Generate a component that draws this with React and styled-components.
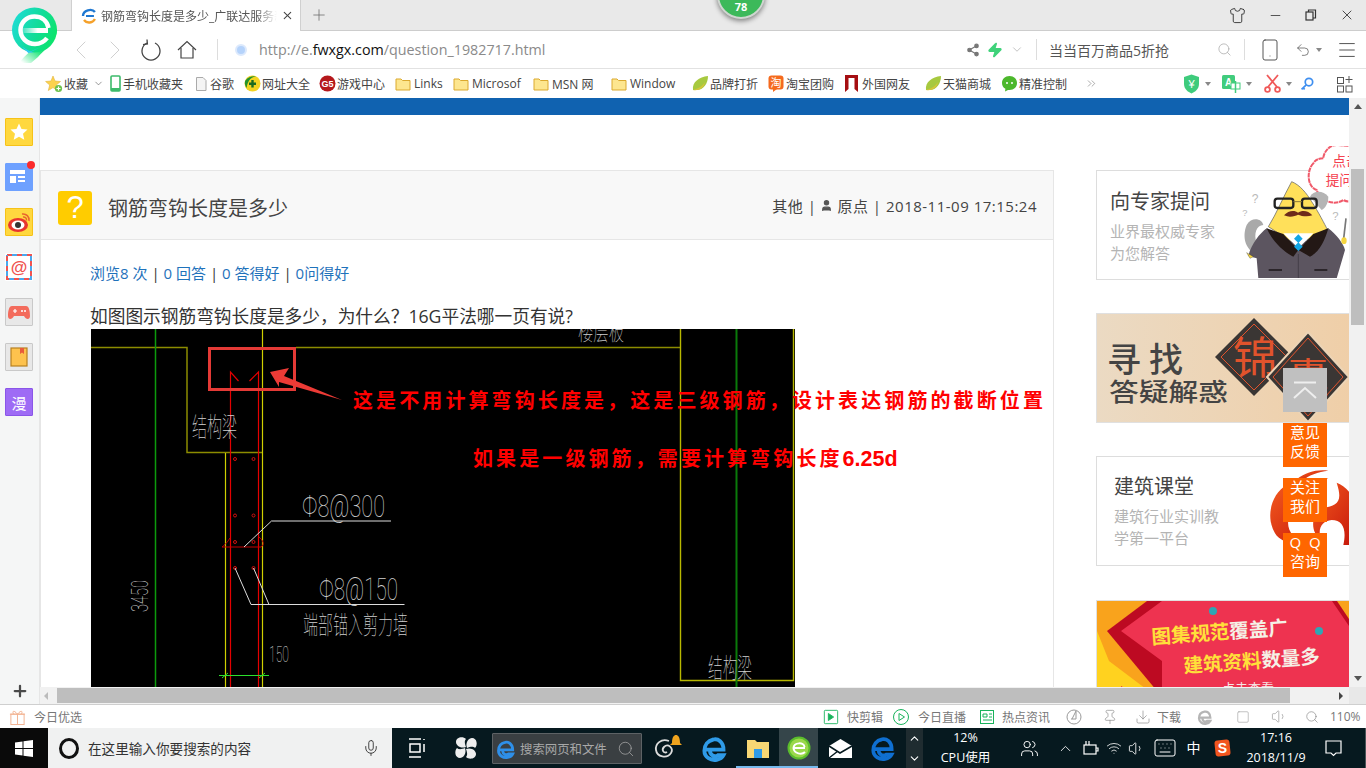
import React from "react";
import styled, { createGlobalStyle } from "styled-components";
import { ChevronDown, ChevronLeft, ChevronRight, ChevronUp, Menu, Minus, Plus, Search, Shirt, Smartphone, Share2, Undo2, X, Zap, Mic, ChevronsRight, Download, Pin, Volume1, Square, Wifi, Keyboard, User, Users } from "lucide-react";

const GlobalStyle = createGlobalStyle`
  html, body { margin: 0; padding: 0; background: #fff; overflow: hidden; }
  body { font-family: "Open Sans", "Noto Sans CJK SC", sans-serif; }
  * { box-sizing: border-box; }
`;

const Screen = styled.div`
  position: relative;
  width: 1366px;
  height: 768px;
  display: flex;
  flex-direction: column;
  overflow: hidden;
`;

/* ---------- browser chrome ---------- */
const TitleBar = styled.div`
  height: 31px;
  flex: none;
  display: flex;
  align-items: flex-end;
  padding-left: 71px;
  background: #e9e9e9;
  border-bottom: 1px solid #cdcdcd;
`;
const Tab = styled.div`
  position: relative;
  width: 230px;
  height: 31px;
  margin-bottom: -1px;
  display: flex;
  align-items: center;
  padding: 0 6px 0 9px;
  gap: 4px;
  background: #fff;
  border: 1px solid #d0d0d0;
  border-bottom: none;
  border-top: none;
`;
const TabText = styled.div`
  width: 177px;
  font-size: 12px;
  color: #555;
  white-space: nowrap;
  overflow: hidden;
  mask-image: linear-gradient(to right, #000 88%, transparent);
`;
const NewTab = styled.div`
  width: 36px;
  height: 30px;
  display: flex;
  align-items: center;
  justify-content: center;
  color: #666;
`;
const WindowButtons = styled.div`
  margin-left: auto;
  height: 30px;
  display: flex;
  align-items: center;
  padding-right: 11px;
  gap: 22px;
  color: #333;
`;
const BrandLogo = styled.div`
  position: absolute;
  left: 11px;
  top: 7px;
  z-index: 3;
`;
const ScoreBadge = styled.div`
  position: absolute;
  left: 717px;
  top: -29px;
  width: 48px;
  height: 48px;
  border-radius: 50%;
  background: #3cb95a;
  border: 2px solid #cfd6d0;
  box-shadow: 0 2px 5px rgba(0, 0, 0, 0.45);
  color: #fff;
  font-size: 11px;
  font-weight: 700;
  display: flex;
  align-items: flex-end;
  justify-content: center;
  padding-bottom: 3px;
  line-height: 14px;
  z-index: 3;
`;
const AddressBar = styled.div`
  height: 37px;
  flex: none;
  display: flex;
  align-items: center;
  background: #fff;
  color: #777;
`;
const NavSlot = styled.div`
  flex: none;
  width: ${(p) => p.$w}px;
  display: flex;
  align-items: center;
  justify-content: center;
  color: ${(p) => p.$color || "#444"};
`;
const VLine = styled.div`
  flex: none;
  width: 1px;
  height: 21px;
  background: #ddd;
`;
const UrlDot = styled.div`
  flex: none;
  width: 12px;
  height: 12px;
  margin: 0 12px 0 17px;
  border-radius: 50%;
  background: #b5d3fb;
  border: 2px solid #dce9fc;
`;
const Url = styled.div`
  flex: none;
  width: 707px;
  font-size: 14.3px;
  color: #8a8a8a;
  white-space: nowrap;
  b { font-weight: 400; color: #111; }
`;
const AdText = styled.div`
  flex: none;
  width: 174px;
  padding-left: 12px;
  font-size: 14px;
  color: #555;
  white-space: nowrap;
`;
const Caret = styled.span`
  display: inline-block;
  width: 0;
  height: 0;
  border-left: 3px solid transparent;
  border-right: 3px solid transparent;
  border-top: 4px solid #888;
`;

const BookmarkBar = styled.div`
  height: 30px;
  flex: none;
  display: flex;
  align-items: center;
  background: #fff;
  border-top: 1px solid #e2e2e2;
  padding-left: 45px;
  position: relative;
`;
const Collapse = styled.div`
  width: 0;
  margin-left: -30px;
  margin-right: 30px;
  color: #555;
  display: flex;
  align-items: center;
`;
const Bookmark = styled.div`
  flex: none;
  width: ${(p) => p.$w}px;
  display: flex;
  align-items: center;
  gap: 1px;
  font-size: 12px;
  color: #444;
  white-space: nowrap;
`;
const BookmarkTools = styled.div`
  flex: none;
  margin-left: 80px;
  display: flex;
  align-items: center;
`;
const ToolSlot = styled.div`
  flex: none;
  width: ${(p) => p.$w}px;
  display: flex;
  align-items: center;
  justify-content: center;
  gap: 5px;
`;

/* ---------- page ---------- */
const Middle = styled.div`
  flex: 1;
  min-height: 0;
  display: flex;
`;
const SideRail = styled.div`
  flex: none;
  width: 40px;
  display: flex;
  flex-direction: column;
  align-items: flex-start;
  gap: 17px;
  padding: 20px 0 4px 5px;
  background: #f5f6f6;
  border-right: 1px solid #e6e6e6;
`;
const RailTile = styled.div`
  position: relative;
  width: 28px;
  height: 28px;
  display: flex;
  align-items: center;
  justify-content: center;
  background: ${(p) => p.$bg};
  border: 1px solid ${(p) => p.$line};
  color: #fff;
  font-size: 15px;
  border-radius: 1px;
`;
const RedDot = styled.span`
  position: absolute;
  top: -3px;
  right: -3px;
  width: 8px;
  height: 8px;
  border-radius: 50%;
  background: #fb2a2a;
`;
const RailAdd = styled.div`
  margin-top: auto;
  margin-left: 6px;
  color: #4a4a4a;
  display: flex;
`;
const Viewport = styled.div`
  flex: 1;
  min-width: 0;
  display: flex;
  flex-direction: column;
`;
const ViewportRow = styled.div`
  flex: 1;
  min-height: 0;
  display: flex;
`;
const Page = styled.div`
  flex: 1;
  min-width: 0;
  overflow: hidden;
  background: #fff;
`;
const BlueBar = styled.div`
  height: 17px;
  background: #1062b0;
`;
const Columns = styled.div`
  display: flex;
  align-items: flex-start;
  padding-top: 55px;
  gap: 42px;
`;
const QuestionCard = styled.div`
  flex: none;
  width: 1014px;
  border: 1px solid #e6e6e6;
  border-bottom: none;
  background: #fff;
`;
const QuestionHead = styled.div`
  height: 69px;
  display: flex;
  align-items: center;
  padding: 6px 16px 0 17px;
  background: #f8f8f8;
  border-bottom: 1px solid #e6e6e6;
`;
const QuestionMark = styled.div`
  flex: none;
  width: 34px;
  height: 34px;
  border-radius: 3px;
  background: #ffcc00;
  color: #fff;
  font: 400 31px/34px "Liberation Sans", sans-serif;
  text-align: center;
`;
const QuestionTitle = styled.h1`
  margin: 0 0 2px 16px;
  font-size: 20px;
  font-weight: 400;
  color: #444;
`;
const QuestionMeta = styled.div`
  margin-left: auto;
  margin-bottom: 6px;
  display: flex;
  align-items: center;
  gap: 4px;
  font-size: 15px;
  letter-spacing: 0.5px;
  color: #444;
  white-space: nowrap;
`;
const QuestionBody = styled.div`
  padding: 22px 0 0 49px;
`;
const Stats = styled.div`
  height: 22px;
  line-height: 22px;
  font-size: 15px;
  color: #1f72bb;
  span { color: #333; }
`;
const QuestionText = styled.p`
  margin: 19px 0 0;
  height: 26px;
  line-height: 26px;
  font-size: 17.7px;
  color: #333;
  white-space: nowrap;
`;
const Drawing = styled.div`
  position: relative;
  width: 704px;
  height: 370px;
  margin-left: 1px;
  background: #000;
  svg { display: block; }
`;
const Remark = styled.div`
  position: absolute;
  left: ${(p) => p.$left}px;
  top: ${(p) => p.$top}px;
  font-size: 20px;
  line-height: 28px;
  font-weight: 700;
  letter-spacing: 3.1px;
  color: #ff0000;
  white-space: nowrap;
  b { font-family: "Liberation Sans", sans-serif; font-size: 21.5px; letter-spacing: 0; }
`;

const SideColumn = styled.div`
  flex: none;
  width: 290px;
  display: flex;
  flex-direction: column;
  gap: 33px;
`;
const PromoCard = styled.div`
  height: ${(p) => p.$h}px;
  display: flex;
  border: 1px solid #ddd;
  background: #fff;
  svg { display: block; flex: none; }
`;
const PromoText = styled.div`
  flex: none;
  width: ${(p) => p.$w}px;
  margin-left: ${(p) => p.$left}px;
  padding-top: ${(p) => p.$top}px;
`;
const PromoTitle = styled.div`
  font-size: 20px;
  line-height: 28px;
  color: #444;
`;
const PromoSub = styled.div`
  margin-top: 4px;
  font-size: 15px;
  line-height: 22px;
  color: #b4b4b4;
`;
const Art = styled.svg`
  margin-top: ${(p) => p.$top || 0}px;
`;
const BannerCard = styled.div`
  height: ${(p) => p.$h}px;
  margin-top: ${(p) => p.$top || 0}px;
  border: 1px solid #e0e0e0;
  overflow: hidden;
  svg { display: block; }
`;

const VScroll = styled.div`
  flex: none;
  position: relative;
  width: 17px;
  background: #f1f1f1;
  display: flex;
  flex-direction: column;
  align-items: center;
`;
const VThumb = styled.div`
  width: 13px;
  height: 156px;
  margin-top: 60px;
  background: #bebebe;
`;
const HScroll = styled.div`
  flex: none;
  height: 17px;
  display: flex;
  align-items: center;
  background: #f1f1f1;
`;
const HThumb = styled.div`
  width: 1233px;
  height: 15px;
  margin-left: 9px;
  background: #bebebe;
`;
const Arrow = styled.span`
  flex: none;
  width: 0;
  height: 0;
  ${(p) => p.$dir === "up" && "margin-top: 6px; border-left: 4px solid transparent; border-right: 4px solid transparent; border-bottom: 5px solid #555;"}
  ${(p) => p.$dir === "down" && "margin-top: auto; margin-bottom: 6px; border-left: 4px solid transparent; border-right: 4px solid transparent; border-top: 5px solid #555;"}
  ${(p) => p.$dir === "left" && "margin-left: 4px; border-top: 4px solid transparent; border-bottom: 4px solid transparent; border-right: 4px solid #bbb;"}
  ${(p) => p.$dir === "right" && "margin-left: 49px; border-top: 4px solid transparent; border-bottom: 4px solid transparent; border-left: 4px solid #444;"}
`;
const ScrollCorner = styled.div`
  flex: none;
  width: 17px;
  height: 17px;
  margin-left: auto;
  background: #e8e8e8;
`;

const FloatDock = styled.div`
  position: absolute;
  left: 1283px;
  top: 368px;
  width: 44px;
  display: flex;
  flex-direction: column;
  gap: 11px;
  z-index: 2;
`;
const DockTop = styled.div`
  height: 44px;
  background: #c0c0c0;
  display: flex;
  align-items: center;
  justify-content: center;
`;
const DockButton = styled.div`
  height: 44px;
  background: #ff6600;
  color: #fff;
  font-size: 15px;
  line-height: 19px;
  text-align: center;
  word-spacing: ${(p) => p.$spread || 0}px;
`;

/* ---------- status bar ---------- */
const StatusBar = styled.div`
  height: 24px;
  flex: none;
  display: flex;
  align-items: center;
  background: #fff;
  border-top: 1px solid #cfcfcf;
  font-size: 12px;
  color: #666;
  white-space: nowrap;
`;
const StatusItem = styled.div`
  flex: none;
  width: ${(p) => p.$w}px;
  display: flex;
  align-items: center;
  justify-content: ${(p) => p.$center ? "center" : "flex-start"};
  gap: ${(p) => p.$gap ?? 6}px;
  padding-left: ${(p) => p.$pad || 0}px;
  color: #777;
`;

/* ---------- taskbar ---------- */
const Taskbar = styled.div`
  height: 40px;
  flex: none;
  display: flex;
  align-items: stretch;
  background: #06191f;
  color: #fff;
`;
const StartButton = styled.div`
  flex: none;
  width: 48px;
  background: #0a0a0a;
  display: flex;
  align-items: center;
  justify-content: center;
`;
const SearchBox = styled.div`
  flex: none;
  width: 344px;
  display: flex;
  align-items: center;
  background: #f0f1f1;
  color: #333;
  font-size: 13.6px;
  padding-left: 11px;
`;
const CortanaRing = styled.div`
  flex: none;
  width: 20px;
  height: 21px;
  margin-right: 9px;
  border-radius: 50%;
  border: 3px solid #111;
`;
const SearchHint = styled.div`
  flex: 1;
`;
const MicSlot = styled.div`
  flex: none;
  width: 42px;
  display: flex;
  justify-content: center;
  color: #333;
`;
const TaskSlot = styled.div`
  position: relative;
  flex: none;
  width: ${(p) => p.$w}px;
  display: flex;
  flex-direction: column;
  align-items: center;
  justify-content: center;
  font-size: ${(p) => p.$size || 13}px;
  line-height: 20px;
  white-space: nowrap;
  background: ${(p) => p.$active ? "#35454a" : "transparent"};
  ${(p) => p.$line && "&::after { content: ''; position: absolute; left: 0; right: 0; bottom: 0; height: 2px; background: #76b9ed; }"}
`;
const WebSearch = styled.div`
  flex: none;
  width: 150px;
  margin: 5px 0 4px;
  margin-left: 1px;
  display: flex;
  align-items: center;
  gap: 4px;
  padding: 0 6px 0 3px;
  background: #3a3f42;
  border: 1px solid #5d6265;
  border-radius: 1px;
  font-size: 12.4px;
  color: #a8a8a8;
  white-space: nowrap;
`;
const ArrowStack = styled.div`
  flex: none;
  width: 17px;
  margin-left: 2px;
  background: #1f2c30;
  display: flex;
  flex-direction: column;
  align-items: center;
  justify-content: space-around;
`;
const NoticeEdge = styled.div`
  flex: 1;
  border-right: 1px solid #4a5558;
`;

const ask = "#b9b9b9";

const Logo = () => (
  <svg width="48" height="58" viewBox="0 0 48 58">
    <defs>
      <linearGradient id="lg" x1="0" y1="0.2" x2="1" y2="0.6">
        <stop offset="0" stopColor="#1fdcd8" />
        <stop offset="0.55" stopColor="#12dc9a" />
        <stop offset="1" stopColor="#0ce46a" />
      </linearGradient>
      <linearGradient id="tail" x1="0.8" y1="0.2" x2="0.1" y2="1">
        <stop offset="0" stopColor="#0ce46a" />
        <stop offset="0.5" stopColor="#28e57e" />
        <stop offset="1" stopColor="#ffffff" />
      </linearGradient>
      <linearGradient id="bar" x1="0" y1="0" x2="1" y2="0">
        <stop offset="0" stopColor="#fff" stopOpacity=".15" />
        <stop offset="0.6" stopColor="#fff" />
      </linearGradient>
    </defs>
    <path d="M46 22 C46 34 34 42 27 50 L20 56 L8 56 C14 48 24 40 30 36 Z" fill="url(#tail)" />
    <circle cx="23.500" cy="23" r="22.500" fill="url(#lg)" />
    <path d="M10 39 C14 42 18 44 18 45 L30 40 L17.500 46 Z" fill="#2fc8f0" />
    <path d="M8 36 C12 41 17 44 23 45.500 L17 45.500 Z" fill="#2fc8f0" />
    <rect x="11" y="21" width="26" height="5" fill="url(#bar)" />
    <path d="M37.500 21 C36 13 30 9.500 23.500 9.500 C15 9.500 9.500 16 9.500 23 C9.500 31 16 37 24 37 C29 37 33 35 36 31" fill="none" stroke="#fff" strokeWidth="4.500" />
  </svg>
);
const TabIcon = () => (
  <svg width="16" height="16" viewBox="0 0 16 16" fill="none">
    <path d="M2 8 C2 2 11 0 14 4" stroke="#1f78d1" strokeWidth="2.400" />
    <path d="M5 8 H13" stroke="#1f78d1" strokeWidth="2" />
    <path d="M3 12 C6 16 12 15 14 11" stroke="#f5a12a" strokeWidth="2.400" />
  </svg>
);
const Reload = () => (
  <svg width="22" height="22" viewBox="0 0 22 22" fill="none" stroke="#444" strokeWidth="1.300">
    <path d="M7 4 A9 9 0 1 0 15 4" />
    <path d="M7 0.500 L7.400 5 L3 5.600" />
  </svg>
);
const HomeIcon = () => (
  <svg width="20" height="20" viewBox="0 0 20 20" fill="none" stroke="#444" strokeWidth="1.200">
    <path d="M1 10 L10 1.500 L19 10" />
    <path d="M4 8 V18 H16 V8" />
  </svg>
);
const RestoreIcon = () => (
  <svg width="12" height="12" viewBox="0 0 12 12" fill="none" stroke="#333" strokeWidth="1.200">
    <rect x="1" y="3" width="7" height="8" />
    <path d="M3.500 3 V1 H10.500 V9 H8" />
  </svg>
);
const StarFav = () => (
  <svg width="18" height="18" viewBox="0 0 18 18">
    <path d="M8 1 L10 6 L15.500 6.500 L11.300 10 L12.600 15.500 L8 12.600 L3.300 15.500 L4.700 10 L0.600 6.500 L6 6Z" fill="#fbd24e" stroke="#e3b43a" strokeWidth=".6" />
    <circle cx="13.500" cy="13.500" r="3.600" fill="#6cc04a" />
    <path d="M13.500 11.500 V15.500 M11.500 13.500 H15.500" stroke="#fff" strokeWidth="1.200" />
  </svg>
);
const PhoneFav = () => (
  <svg width="13" height="17" viewBox="0 0 13 17">
    <rect x="2" y="1" width="9" height="15" rx="1" fill="#fff" stroke="#3dbb6b" strokeWidth="1.600" />
    <rect x="2" y="13" width="9" height="3" fill="#3dbb6b" />
  </svg>
);
const PageFav = () => (
  <svg width="16" height="16" viewBox="0 0 16 16" fill="#f4f4f4" stroke="#aaa">
    <path d="M3.500 1.500 H10 L13 4.500 V14.500 H3.500Z" />
  </svg>
);
const GlobeFav = () => (
  <svg width="17" height="17" viewBox="0 0 17 17">
    <circle cx="8.500" cy="8.500" r="8" fill="#f3d321" />
    <path d="M1 6 C5 1 9 1 12 1.600 C8 2 4 4 2.600 13 C1 11 .6 8 1 6Z" fill="#23922c" />
    <path d="M8.500 5 V12.500 M5 8.700 H12" stroke="#1a6b20" strokeWidth="2.400" />
  </svg>
);
const GameFav = () => (
  <svg width="17" height="17" viewBox="0 0 17 17">
    <circle cx="8.500" cy="8.500" r="8" fill="#b5181c" />
    <text x="8.500" y="12" textAnchor="middle" fontSize="9" fontWeight="700" fill="#fff" fontFamily="Liberation Sans">G5</text>
  </svg>
);
const Folder = () => (
  <svg width="16" height="15" viewBox="0 0 16 15" style={{ marginRight: 2 }}>
    <path d="M1 3 H6 L7.500 4.500 H15 V14 H1Z" fill="#fde68f" stroke="#dba92f" />
  </svg>
);
const Leaf = () => (
  <svg width="17" height="17" viewBox="0 0 17 17">
    <path d="M1 15 C0 7 7 2 16 1 C16 9 11 16 3 15Z" fill="#a7c93f" />
    <path d="M1 15 C5 14 10 12 13 7 C12 13 7 16 1 15Z" fill="#d6c53a" />
  </svg>
);
const TaoFav = () => (
  <svg width="17" height="17" viewBox="0 0 17 17">
    <rect x=".5" y=".5" width="15" height="14" rx="3" fill="#f56a1e" />
    <path d="M5 14 L5 17 L9 14Z" fill="#f56a1e" />
    <text x="8" y="12" textAnchor="middle" fontSize="11" fill="#fff">淘</text>
  </svg>
);
const RibbonFav = () => (
  <svg width="15" height="17" viewBox="0 0 15 17" style={{ marginRight: 2 }}>
    <path d="M1 0 H14 V17 L10.500 14 V3 H4.500 V14 L1 17Z" fill="#a50e12" />
  </svg>
);
const ChatFav = () => (
  <svg width="17" height="17" viewBox="0 0 17 17">
    <path d="M8.500 1 C13 1 16 4 16 8 C16 12 13 15 8.500 15 L7 15 L4 16.500 L4.400 13.800 C2 12.500 1 10.500 1 8 C1 4 4 1 8.500 1Z" fill="#4cb82c" />
    <circle cx="6" cy="8" r="1" fill="#fff" />
    <circle cx="11" cy="8" r="1" fill="#fff" />
  </svg>
);
const ShieldTool = () => (
  <svg width="17" height="20" viewBox="0 0 17 20">
    <path d="M8.500 0.500 L16 3 V10 C16 15 12 18 8.500 19.500 C5 18 1 15 1 10 V3Z" fill="#3ecb7c" />
    <text x="8.500" y="14" textAnchor="middle" fontSize="11" fill="#fff" fontFamily="Liberation Sans">¥</text>
  </svg>
);
const TranslateTool = () => (
  <svg width="20" height="20" viewBox="0 0 20 20">
    <rect x="1" y="1" width="13" height="14" rx="1.500" fill="#41cc7d" />
    <text x="4" y="12" fontSize="10" fontWeight="700" fill="#fff" fontFamily="Liberation Sans">A</text>
    <rect x="10" y="9" width="9" height="6" fill="#fff" stroke="#41cc7d" />
    <path d="M14.500 7 V19" stroke="#41cc7d" strokeWidth="1.500" />
  </svg>
);
const CutTool = () => (
  <svg width="17" height="19" viewBox="0 0 17 19" fill="none" stroke="#f05a5a" strokeWidth="1.800">
    <path d="M3 1 L13 13 M14 1 L4 13" />
    <circle cx="3.500" cy="15.500" r="2.400" />
    <circle cx="13.500" cy="15.500" r="2.400" />
  </svg>
);
const KeyTool = () => (
  <svg width="18" height="18" viewBox="0 0 18 18" fill="none" stroke="#3f8ff0" strokeWidth="2.200">
    <circle cx="11.500" cy="6.500" r="4.800" />
    <path d="M8 10 L2 16 M4 14 L6 16" />
  </svg>
);
const GridTool = () => (
  <svg width="16" height="18" viewBox="0 0 16 18" fill="none" stroke="#555">
    <rect x=".5" y="2.500" width="6" height="6" />
    <rect x=".5" y="11" width="6" height="6" />
    <rect x="9" y="11" width="6" height="6" />
    <path d="M12 1 V8 M8.500 4.500 H15.500" />
  </svg>
);

const MailMark = () => (
  <svg width="26" height="26" viewBox="0 0 26 26">
    <rect x="1" y="1" width="24" height="24" fill="none" stroke="#ef5350" strokeWidth="2" strokeDasharray="5 5" />
    <rect x="1" y="1" width="24" height="24" fill="none" stroke="#4aa8ee" strokeWidth="2" strokeDasharray="5 5" strokeDashoffset="5" />
    <text x="13" y="18.500" textAnchor="middle" fontSize="17" fontWeight="700" fill="#ef5350" fontFamily="Liberation Sans">@</text>
  </svg>
);

const Rail = () => (
  <SideRail>
    <RailTile $bg="#ffd83f" $line="#f6c218">
      <svg width="18" height="18" viewBox="0 0 18 18"><path d="M9 0.500 L11.500 6 L17.500 6.600 L13 10.700 L14.300 16.800 L9 13.700 L3.700 16.800 L5 10.700 L0.500 6.600 L6.500 6Z" fill="#fff" /></svg>
    </RailTile>
    <RailTile $bg="#6ea1ff" $line="#6ea1ff">
      <svg width="20" height="18" viewBox="0 0 20 18" fill="#fff"><rect x="1" y="2" width="15" height="4" /><rect x="1" y="8" width="6" height="7" /><rect x="9" y="8" width="7" height="2" /><rect x="9" y="12" width="7" height="2" /></svg>
      <RedDot />
    </RailTile>
    <RailTile $bg="#ffd83f" $line="#f6c218">
      <svg width="24" height="22" viewBox="0 0 24 22">
        <ellipse cx="11" cy="14" rx="10" ry="7" fill="#e8352e" />
        <ellipse cx="11" cy="14" rx="6.500" ry="4.500" fill="#fff" />
        <circle cx="11" cy="14" r="3" fill="#333" />
        <path d="M15 3 A6 6 0 0 1 22 10 M16 6 A3 3 0 0 1 19.500 9.500" fill="none" stroke="#e8652e" strokeWidth="1.500" />
      </svg>
    </RailTile>
    <RailTile $bg="#fff" $line="#fff"><MailMark /></RailTile>
    <RailTile $bg="#e8e8e8" $line="#c9c9c9">
      <svg width="22" height="18" viewBox="0 0 22 18">
        <path d="M4 3 H18 C21 3 22 8 22 13 C22 17 18 17 16 13 H6 C4 17 0 17 0 13 C0 8 1 3 4 3Z" fill="#f36b5c" />
        <path d="M5 8 H9 M7 6 V10" stroke="#fff" strokeWidth="1.200" />
        <circle cx="14" cy="8" r="1" fill="#fff" /><circle cx="17" cy="8" r="1" fill="#fff" />
      </svg>
    </RailTile>
    <RailTile $bg="#e8e8e8" $line="#c9c9c9">
      <svg width="18" height="20" viewBox="0 0 18 20">
        <rect x="1" y="1" width="16" height="18" fill="#fdc24e" stroke="#b88020" strokeWidth="1.200" />
        <path d="M10 1 H14 V7 L12 5.500 L10 7Z" fill="#e85b3c" />
      </svg>
    </RailTile>
    <RailTile $bg="#9e6bf5" $line="#8a55e8">漫</RailTile>
    <RailAdd><Plus size={18} strokeWidth={3} /></RailAdd>
  </SideRail>
);

const Cad = () => (
  <svg width="704" height="370" viewBox="0 0 704 370" fontFamily="'Noto Sans CJK SC', sans-serif" fontWeight="100">
    <g fill="none">
      <path d="M0 18.500 H96 V123.500 H171 M205 18.500 H589" stroke="#8c8c00" strokeWidth="1.500" />
      <path d="M589.500 0 V351.500 H702.500 V0" stroke="#b8b800" strokeWidth="1.400" />
      <path d="M64.500 0 V370" stroke="#0c9a0c" strokeWidth="1.500" />
      <path d="M645.500 0 V370" stroke="#0a7a0a" strokeWidth="2" />
      <path d="M171.500 0 V370 M134.500 124 V370" stroke="#d0d000" strokeWidth="1.200" />
      <path d="M139.500 370 V43 L147.500 52 M167.500 370 V43 L158.500 52" stroke="#e40000" strokeWidth="1.200" />
      <path d="M131 218 H170 C174 216 172 211 168 208 M131 218 C136 214 137 212 139 209" stroke="#c40000" />
      <g stroke="#d01010">
        {[130, 186.500, 213, 239].flatMap((y) => [144, 162.500].map((x) => <circle key={x + "-" + y} cx={x} cy={y} r="1.500" />))}
      </g>
      <path d="M153 218 L180.500 192 H300 M144 239 L160 275.500 H313.500 M162.500 239 L178 275.500" stroke="#ddd" />
      <path d="M128 346.500 H178 M131 349 L137 344 M168 349 L174 344" stroke="#2ce02c" />
      <rect x="118.500" y="19.500" width="85" height="41" stroke="#e43a36" strokeWidth="3" />
    </g>
    <path d="M179 43 L198 39 L193 47 L251 71 L188 53 L188 58Z" fill="#ec3b36" />
    <g fill="#d0d0d0">
      <text x="101" y="108" fontSize="22" textLength="45" lengthAdjust="spacingAndGlyphs" transform="translate(0 -24) scale(1 1.220)">结构梁</text>
      <text x="487" y="11" fontSize="22" textLength="46" lengthAdjust="spacingAndGlyphs">楼层板</text>
      <text x="211" y="188" fontSize="32" textLength="83" lengthAdjust="spacingAndGlyphs" fontFamily="Roboto">Φ8@300</text>
      <text x="228" y="271" fontSize="32" textLength="79" lengthAdjust="spacingAndGlyphs" fontFamily="Roboto">Φ8@150</text>
      <text x="212" y="305" fontSize="22" textLength="105" lengthAdjust="spacingAndGlyphs" transform="translate(0 -38) scale(1 1.125)">端部锚入剪力墙</text>
      <text x="0" y="0" fontSize="24" textLength="32" lengthAdjust="spacingAndGlyphs" fontFamily="Roboto" transform="translate(57 283) rotate(-90)">3450</text>
      <text x="178" y="333" fontSize="22" textLength="20" lengthAdjust="spacingAndGlyphs" fontFamily="Roboto">150</text>
      <text x="617" y="349" fontSize="22" textLength="44" lengthAdjust="spacingAndGlyphs" transform="translate(0 -80) scale(1 1.230)">结构梁</text>
    </g>
  </svg>
);

const Mascot = () => (
  <Art width="110" height="132" viewBox="480 48 330 396" $top={-25}>
    <path d="M700 100 C680 120 680 170 710 180 C720 210 760 230 790 210 C810 220 830 215 840 200 L840 50 L770 45 C745 45 730 70 730 85 C715 85 705 90 700 100Z" fill="#fff" stroke="#f05a6a" strokeWidth="6" strokeDasharray="14 2" />
    <g fontSize="41" fill="#f4414f" fontFamily="'Noto Sans CJK SC', sans-serif">
      <text x="757" y="108">点击</text>
      <text x="737" y="166">提问</text>
    </g>
    <g fontSize="36" fill={ask} fontFamily="'Liberation Sans', sans-serif">
      <text x="515" y="218">?</text>
      <text x="487" y="258" fontSize="28">?</text>
      <text x="757" y="270" fontSize="34">?</text>
    </g>
    <path d="M545 375 C495 370 485 320 500 285 C515 260 545 265 550 285 C530 285 520 310 530 340 Z" fill="#a9a9a9" />
    <path d="M690 200 C700 180 730 180 745 200 C745 220 735 235 725 240Z" fill="#b4b4b4" />
    <path d="M635 155 C660 165 680 190 695 215 C715 245 735 285 742 298 L650 345 L565 290 C590 250 610 200 635 155Z" fill="#ffe05a" stroke="#555" strokeWidth="2" />
    <path d="M560 295 L655 345 L745 295 C770 315 790 340 795 360 L770 445 L535 445 L530 385 L505 378 C515 340 540 310 560 295Z" fill="#5c5560" />
    <path d="M610 310 H700 L655 355Z" fill="#fff" />
    <path d="M560 295 C575 330 610 365 640 380 L655 360 L610 312Z M745 295 C735 330 720 365 690 380 L655 360 L700 312Z" fill="#231815" />
    <path d="M655 313 L668 326 L655 339 L642 326Z M655 337 L668 350 L655 363 L642 350Z" fill="#12a6e4" />
    <path d="M655 372 V445" stroke="#3a343c" strokeWidth="2" />
    <path d="M566 420 H606 M703 420 H742" stroke="#1b1618" strokeWidth="5" />
    <path d="M520 380 L500 368 L510 385Z" fill="#f5d53f" stroke="#333" />
    <path d="M798 265 L790 335" stroke="#777" strokeWidth="5" />
    <ellipse cx="792" cy="332" rx="8" ry="10" fill="#f5d53f" />
    <rect x="584" y="206" width="56" height="28" rx="8" fill="none" stroke="#222" strokeWidth="7" />
    <rect x="666" y="206" width="44" height="28" rx="8" fill="none" stroke="#222" strokeWidth="7" />
    <path d="M640 215 H666" stroke="#8a7a3a" strokeWidth="3" />
    <path d="M612 256 C625 240 645 240 654 248 C665 240 685 240 697 256 C680 262 665 258 654 254 C645 258 630 264 612 256Z" fill="#6d2b1b" />
  </Art>
);

const Phoenix = () => (
  <Art width="84" height="75" viewBox="564 120 252 225" $top={13}>
    <defs>
      <linearGradient id="ph" x1="0" y1="0" x2="1" y2="1">
        <stop offset="0" stopColor="#f35a1e" />
        <stop offset="1" stopColor="#c4140a" />
      </linearGradient>
    </defs>
    <path d="M650 148 C680 125 710 118 745 122 C715 125 685 135 665 155Z" fill="url(#ph)" />
    <path d="M680 165 C710 145 730 142 745 145 C720 150 705 160 695 172Z" fill="url(#ph)" />
    <path d="M620 165 C575 190 555 260 585 310 C600 335 640 348 680 340 C640 330 620 300 625 270 C640 230 690 210 740 225 C700 190 650 190 620 165Z" fill="url(#ph)" />
    <path d="M770 158 C800 170 830 200 830 260 L830 345 L790 345 C800 300 790 270 755 270 C725 272 710 300 725 330 C690 310 690 250 730 235 C770 225 790 220 770 158Z" fill="url(#ph)" />
  </Art>
);

const Brocade = () => (
  <svg width="290" height="108" viewBox="0 0 290 108" fontFamily="'Noto Sans CJK SC', sans-serif">
    <defs>
      <linearGradient id="sand" x1="0" y1="0" x2="1" y2="0">
        <stop offset="0" stopColor="#ebdac3" />
        <stop offset="1" stopColor="#f0cda4" />
      </linearGradient>
    </defs>
    <rect width="290" height="108" fill="url(#sand)" />
    <text x="10" y="58" fontSize="34" fontWeight="500" fill="#444" textLength="76" lengthAdjust="spacing">寻找</text>
    <text x="12" y="87" fontSize="25" fontWeight="500" fill="#444" textLength="119" lengthAdjust="spacingAndGlyphs">答疑解惑</text>
    <path d="M157 4 L196 43 L157 82 L118 43Z" fill="#3a3634" />
    <path d="M157 10 L190 43 L157 76 L124 43Z" fill="none" stroke="#e0532c" />
    <text x="136" y="60" fontSize="44" fill="#e0532c">锦</text>
    <path d="M211 18 L252 63 L211 108 L170 63Z" fill="#3a3634" stroke="#ecd4b6" strokeWidth="2" />
    <path d="M211 24 L246 63 L211 102 L176 63Z" fill="none" stroke="#e0532c" />
    <text x="190" y="80" fontSize="42" fill="#e0532c">囊</text>
  </svg>
);

const Coverage = () => (
  <svg width="290" height="110" viewBox="0 0 290 110" fontFamily="'Noto Sans CJK SC', sans-serif" fontWeight="700">
    <rect width="290" height="110" fill="#f9a31c" />
    <path d="M0 30 L12 60 L65 100 L0 110Z" fill="#ffd21f" />
    <path d="M10 30 L50 0 H240 L260 30 L240 60 L60 90Z" fill="#bd0a22" />
    <path d="M24 30 L65 0 H235 L252 25 L260 110 H65 V60Z" fill="#ee3350" />
    <path d="M24 85 L36 92 L24 100Z" fill="#e8243e" />
    <circle cx="116" cy="10" r="4" fill="#2fa6b4" />
    <circle cx="222" cy="30" r="4" fill="#2fa6b4" />
    <g fontSize="19.500" transform="rotate(-4 140 40)">
      <text x="55" y="37" fill="#ffe03a">图集规范<tspan fill="#f5f0e6">覆盖广</tspan></text>
      <text x="85" y="68" fill="#ffe03a">建筑资料<tspan fill="#f5f0e6">数量多</tspan></text>
    </g>
    <text x="125" y="92" fontSize="13" fill="#f5e6e6" fontWeight="400">点击查看</text>
  </svg>
);

const bookmarks = [
  { icon: <PhoneFav />, text: "手机收藏夹", w: 84 },
  { icon: <PageFav />, text: "谷歌", w: 51 },
  { icon: <GlobeFav />, text: "网址大全", w: 75 },
  { icon: <GameFav />, text: "游戏中心", w: 76 },
  { icon: <Folder />, text: "Links", w: 58 },
  { icon: <Folder />, text: "Microsof", w: 80 },
  { icon: <Folder />, text: "MSN 网", w: 78 },
  { icon: <Folder />, text: "Window", w: 81 },
  { icon: <Leaf />, text: "品牌打折", w: 76 },
  { icon: <TaoFav />, text: "淘宝团购", w: 76 },
  { icon: <RibbonFav />, text: "外国网友", w: 81 },
  { icon: <Leaf />, text: "天猫商城", w: 76 },
  { icon: <ChatFav />, text: "精准控制", w: 83 },
];

const StatusGlyph = ({ children, size = 18, stroke = "#9a9a9a" }) => (
  <svg width={size} height={size} viewBox="0 0 18 18" fill="none" stroke={stroke}>{children}</svg>
);

const EdgeGlyph = ({ color, size = 24 }) => (
  <svg width={size} height={size} viewBox="0 0 24 24" fill="none">
    <path d="M4 13 H20 C20 6 15 3 11 4 C6 5 3 9 3 14 C3 20 9 23 14 22 C17 21.500 19 20 20 18 H15 C12 20 8 18 8 14" stroke={color} strokeWidth="3.400" />
  </svg>
);

export default function App() {
  return (
    <Screen>
      <GlobalStyle />
      <BrandLogo><Logo /></BrandLogo>
      <ScoreBadge>78</ScoreBadge>

      <TitleBar>
        <Tab>
          <TabIcon />
          <TabText>钢筋弯钩长度是多少_广联达服务新干线</TabText>
          <X size={13} color="#444" />
        </Tab>
        <NewTab><Plus size={18} strokeWidth={1} /></NewTab>
        <WindowButtons>
          <Shirt size={17} strokeWidth={1.300} />
          <Minus size={15} strokeWidth={1.300} />
          <RestoreIcon />
          <X size={16} strokeWidth={1.300} />
        </WindowButtons>
      </TitleBar>

      <AddressBar>
        <NavSlot $w={64} />
        <NavSlot $w={34} $color="#ccc"><ChevronLeft size={32} strokeWidth={0.700} /></NavSlot>
        <NavSlot $w={34} $color="#ccc"><ChevronRight size={32} strokeWidth={0.700} /></NavSlot>
        <NavSlot $w={37}><Reload /></NavSlot>
        <NavSlot $w={36}><HomeIcon /></NavSlot>
        <NavSlot $w={12} />
        <VLine />
        <UrlDot />
        <Url>http://e.<b>fwxgx.com</b>/question_1982717.html</Url>
        <NavSlot $w={14} $color="#777"><Share2 size={14} fill="#777" /></NavSlot>
        <NavSlot $w={30} $color="#3fd27a"><Zap size={16} fill="#3fd27a" /></NavSlot>
        <NavSlot $w={14} $color="#999"><ChevronDown size={17} strokeWidth={1} /></NavSlot>
        <NavSlot $w={12} />
        <VLine />
        <AdText>当当百万商品5折抢</AdText>
        <NavSlot $w={26} $color="#aaa"><Search size={15} strokeWidth={1.200} /></NavSlot>
        <NavSlot $w={7} />
        <VLine />
        <NavSlot $w={50}><Smartphone size={24} strokeWidth={0.900} /></NavSlot>
        <NavSlot $w={16}><Undo2 size={22} strokeWidth={1} /></NavSlot>
        <NavSlot $w={16}><Caret /></NavSlot>
        <NavSlot $w={40}><Menu size={22} strokeWidth={1} /></NavSlot>
      </AddressBar>

      <BookmarkBar>
        <Collapse><ChevronLeft size={13} strokeWidth={1.300} /><svg width="2" height="12"><rect width="1" height="12" fill="#555" /></svg></Collapse>
        <Bookmark $w={64}><StarFav />收藏<ChevronDown size={11} strokeWidth={1.200} style={{ marginLeft: 4 }} /></Bookmark>
        {bookmarks.map((b) => (
          <Bookmark key={b.text} $w={b.w}>{b.icon}{b.text}</Bookmark>
        ))}
        <ToolSlot $w={14}><ChevronsRight size={13} strokeWidth={1} color="#666" /></ToolSlot>
        <BookmarkTools>
          <ToolSlot $w={38}><ShieldTool /><Caret /></ToolSlot>
          <ToolSlot $w={40}><TranslateTool /><Caret /></ToolSlot>
          <ToolSlot $w={44}><CutTool /><Caret /></ToolSlot>
          <ToolSlot $w={14}><KeyTool /></ToolSlot>
          <ToolSlot $w={62}><GridTool /></ToolSlot>
        </BookmarkTools>
      </BookmarkBar>

      <Middle>
        <Rail />
        <Viewport>
          <ViewportRow>
            <Page>
              <BlueBar />
              <Columns>
                <QuestionCard>
                  <QuestionHead>
                    <QuestionMark>?</QuestionMark>
                    <QuestionTitle>钢筋弯钩长度是多少</QuestionTitle>
                    <QuestionMeta>
                      其他 | <User size={13} fill="#555" color="#555" /> 原点 | 2018-11-09 17:15:24
                    </QuestionMeta>
                  </QuestionHead>
                  <QuestionBody>
                    <Stats>浏览8 次 <span>|</span> 0 回答 <span>|</span> 0 答得好 <span>|</span> 0问得好</Stats>
                    <QuestionText>如图图示钢筋弯钩长度是多少，为什么？16G平法哪一页有说?</QuestionText>
                    <Drawing>
                      <Cad />
                      <Remark $left={262} $top={58}>这是不用计算弯钩长度是，这是三级钢筋，设计表达钢筋的截断位置</Remark>
                      <Remark $left={382} $top={116}>如果是一级钢筋，需要计算弯钩长度<b>6.25d</b></Remark>
                    </Drawing>
                  </QuestionBody>
                </QuestionCard>

                <SideColumn>
                  <PromoCard $h={110}>
                    <PromoText $w={130} $left={13} $top={17}>
                      <PromoTitle>向专家提问</PromoTitle>
                      <PromoSub>业界最权威专家<br />为您解答</PromoSub>
                    </PromoText>
                    <Mascot />
                  </PromoCard>
                  <BannerCard $h={110}><Brocade /></BannerCard>
                  <PromoCard $h={110}>
                    <PromoText $w={154} $left={17} $top={16}>
                      <PromoTitle>建筑课堂</PromoTitle>
                      <PromoSub>建筑行业实训教<br />学第一平台</PromoSub>
                    </PromoText>
                    <Phoenix />
                  </PromoCard>
                  <BannerCard $h={110} $top={1}><Coverage /></BannerCard>
                </SideColumn>
              </Columns>
            </Page>
            <VScroll>
              <Arrow $dir="up" />
              <VThumb />
              <Arrow $dir="down" />
            </VScroll>
          </ViewportRow>
          <HScroll>
            <Arrow $dir="left" />
            <HThumb />
            <Arrow $dir="right" />
            <ScrollCorner />
          </HScroll>
        </Viewport>
      </Middle>

      <FloatDock>
        <DockTop>
          <svg width="26" height="18" viewBox="0 0 26 18" fill="none" stroke="#eee" strokeWidth="2">
            <path d="M2 1.500 H24 M2 17 L13 7 L24 17" />
          </svg>
        </DockTop>
        <DockButton>意见<br />反馈</DockButton>
        <DockButton>关注<br />我们</DockButton>
        <DockButton $spread={4}>Q Q<br />咨询</DockButton>
      </FloatDock>

      <StatusBar>
        <StatusItem $w={82} $gap={8} $pad={9}>
          <StatusGlyph stroke="#f2b08e"><rect x="2" y="6" width="14" height="11" /><path d="M1 6 H17 M9 6 V17 M9 6 C5 1 3 3 5 6 M9 6 C13 1 15 3 13 6" /></StatusGlyph>
          今日优选
        </StatusItem>
        <StatusItem $w={741} />
        <StatusItem $w={60} $gap={8}>
          <StatusGlyph stroke="#19b35c"><rect x="1.500" y="1.500" width="15" height="15" rx="1" /><path d="M6 5 L12 9 L6 13Z" fill="#19b35c" /></StatusGlyph>
          <span>快剪辑</span>
        </StatusItem>
        <StatusItem $w={85} $gap={8} $pad={9}>
          <StatusGlyph stroke="#19b35c"><circle cx="9" cy="9" r="7.500" /><path d="M7 5.500 L12.500 9 L7 12.500Z" /></StatusGlyph>
          <span>今日直播</span>
        </StatusItem>
        <StatusItem $w={88} $gap={6} $pad={10}>
          <StatusGlyph stroke="#19b35c"><rect x="2.500" y="2.500" width="13" height="13" /><path d="M5 6 H9 V9 H5Z M11 6 H14 M11 9 H14 M5 12 H14" /></StatusGlyph>
          <span>热点资讯</span>
        </StatusItem>
        <StatusItem $w={36} $center><StatusGlyph><circle cx="9" cy="9" r="7" /><path d="M7 11 L11 3 V11 H6" /></StatusGlyph></StatusItem>
        <StatusItem $w={36} $center><Pin size={16} strokeWidth={1} color="#888" /></StatusItem>
        <StatusItem $w={62} $gap={6} $pad={7}><Download size={16} strokeWidth={1} color="#888" /><span>下载</span></StatusItem>
        <StatusItem $w={30} $center><EdgeGlyph color="#b5b5b5" size={16} /></StatusItem>
        <StatusItem $w={46} $center><Square size={14} strokeWidth={1} color="#999" /></StatusItem>
        <StatusItem $w={26} $center><Volume1 size={17} strokeWidth={1} color="#999" /></StatusItem>
        <StatusItem $w={30} $center $pad={10}><Search size={14} strokeWidth={1} color="#777" /></StatusItem>
        <StatusItem $w={44} $gap={0} $pad={8}>110%</StatusItem>
      </StatusBar>

      <Taskbar>
        <StartButton>
          <svg width="18" height="17" viewBox="0 0 18 17" fill="#fff">
            <path d="M0 2.500 L7.500 1.400 V8 H0Z M8.500 1.200 L18 0 V8 H8.500Z M0 9 H7.500 V15.600 L0 14.500Z M8.500 9 H18 V17 L8.500 15.800Z" />
          </svg>
        </StartButton>
        <SearchBox>
          <CortanaRing />
          <SearchHint>在这里输入你要搜索的内容</SearchHint>
          <MicSlot><Mic size={18} strokeWidth={1.200} /></MicSlot>
        </SearchBox>
        <TaskSlot $w={49}>
          <svg width="17" height="20" viewBox="0 0 17 20" fill="none" stroke="#fff" strokeWidth="1.500">
            <path d="M1 1 H13 M1 19 H13" /><rect x="2" y="6" width="10" height="8" /><path d="M16 1 V2 M16 6 V14" />
          </svg>
        </TaskSlot>
        <TaskSlot $w={50}>
          <svg width="24" height="24" viewBox="0 0 24 24" fill="#eee">
            <path d="M12 11 C6 13 2 9 2 6 C2 1 9 0 12 3 C10 5 11 8 12 11Z M13 12 C11 6 15 2 18 2 C23 2 24 9 21 12 C19 10 16 11 13 12Z M12 13 C18 11 22 15 22 18 C22 23 15 24 12 21 C14 19 13 16 12 13Z M11 12 C13 18 9 22 6 22 C1 22 0 15 3 12 C5 14 8 13 11 12Z" />
          </svg>
        </TaskSlot>
        <WebSearch>
          <EdgeGlyph color="#2e8fe8" size={20} />
          <span style={{ flex: 1 }}>搜索网页和文件</span>
          <Search size={18} strokeWidth={1} />
        </WebSearch>
        <TaskSlot $w={50}>
          <svg width="32" height="28" viewBox="0 0 32 28" fill="none">
            <path d="M18 7 C10 4 4 10 5 16 C6 23 16 25 20 19 C23 14 17 9 13 13 C10 16 13 20 16 18" stroke="#ddd" strokeWidth="1.800" />
            <path d="M21 9 C21 3 23 1 25 1 C27 1 29 3 29 9 L31 11 H19Z" fill="#f0a41e" />
          </svg>
        </TaskSlot>
        <TaskSlot $w={44}><EdgeGlyph color="#2f9be8" size={27} /></TaskSlot>
        <TaskSlot $w={43} $line>
          <svg width="24" height="22" viewBox="0 0 24 22">
            <path d="M1 3 H9 L11 5 H23 V21 H1Z" fill="#f7d774" />
            <rect x="8" y="12" width="8" height="9" fill="#2f9be8" />
          </svg>
        </TaskSlot>
        <TaskSlot $w={39} $active $line>
          <svg width="26" height="28" viewBox="0 0 26 28">
            <circle cx="13" cy="14" r="10.500" fill="#9ad84a" stroke="#5bbd2c" strokeWidth="2" />
            <path d="M7 14 H19 M7.500 14 C8 8 18 8 18.500 13 M7.500 14 C8 20 16 21 19 18" fill="none" stroke="#fff" strokeWidth="2" />
          </svg>
        </TaskSlot>
        <TaskSlot $w={44}>
          <svg width="25" height="21" viewBox="0 0 25 21">
            <path d="M1 8 L12.500 1 L24 8 V20 H1Z" fill="#fff" />
            <path d="M1 8 L12 15 L24 8 M1 20 L10 13" fill="none" stroke="#06191f" strokeWidth="1.500" />
          </svg>
        </TaskSlot>
        <TaskSlot $w={42}><EdgeGlyph color="#0f6fd1" size={26} /></TaskSlot>
        <ArrowStack><ChevronUp size={13} strokeWidth={2} /><ChevronDown size={13} strokeWidth={2} /></ArrowStack>
        <TaskSlot $w={85} $size={12.500}><span>12%</span><span>CPU使用</span></TaskSlot>
        <TaskSlot $w={42}><Users size={19} strokeWidth={1.200} /></TaskSlot>
        <TaskSlot $w={2} />
        <TaskSlot $w={26}><ChevronUp size={17} strokeWidth={1.200} /></TaskSlot>
        <TaskSlot $w={24}>
          <svg width="18" height="16" viewBox="0 0 18 16" fill="none" stroke="#fff" strokeWidth="1.200"><rect x="3" y="5" width="12" height="9" /><path d="M15 8 H17 V11 H15 M5 1 V5 M8 1 V5" /></svg>
        </TaskSlot>
        <TaskSlot $w={24}><Wifi size={16} strokeWidth={1.200} /></TaskSlot>
        <TaskSlot $w={21}><Volume1 size={17} strokeWidth={1.200} /></TaskSlot>
        <TaskSlot $w={35}><Keyboard size={24} strokeWidth={1} /></TaskSlot>
        <TaskSlot $w={23} $size={14}>中</TaskSlot>
        <TaskSlot $w={35}>
          <svg width="17" height="18" viewBox="0 0 17 18">
            <rect x="1" y="1" width="15" height="16" rx="3" fill="#f2551e" transform="rotate(-6 8.500 9)" />
            <text x="8.500" y="14" textAnchor="middle" fontSize="14" fontWeight="700" fill="#fff" fontFamily="Liberation Sans">S</text>
          </svg>
        </TaskSlot>
        <TaskSlot $w={72} $size={12.500}><span>17:16</span><span>2018/11/9</span></TaskSlot>
        <TaskSlot $w={42}>
          <svg width="17" height="17" viewBox="0 0 17 17" fill="none" stroke="#fff" strokeWidth="1.200">
            <path d="M1 1 H16 V13 H11 L8.500 15.500 L6 13 H1Z" />
          </svg>
        </TaskSlot>
        <NoticeEdge />
      </Taskbar>
    </Screen>
  );
}
